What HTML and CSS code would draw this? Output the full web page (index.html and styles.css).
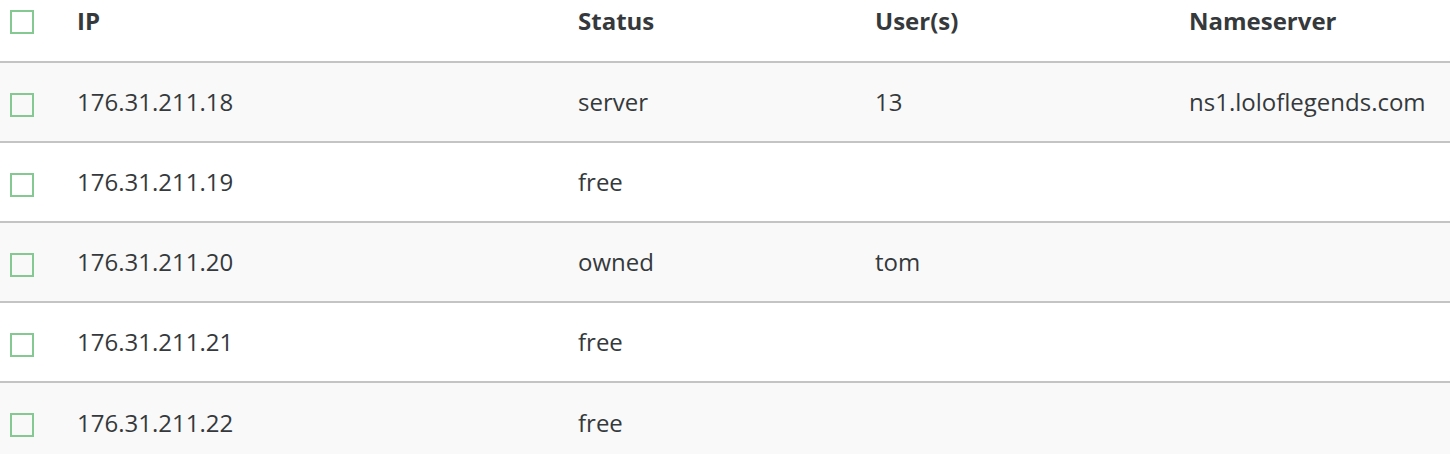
FILE: index.html
```html
<!DOCTYPE html>
<html>
<head>
<meta charset="utf-8">
<link rel="stylesheet" href="styles.css">
</head>
<body>
<table class="ip-table">
  <colgroup>
    <col class="c-check"><col class="c-ip"><col class="c-status"><col class="c-users"><col class="c-ns">
  </colgroup>
  <thead>
    <tr>
      <th class="cell-check"><span class="box"></span></th>
      <th>IP</th>
      <th>Status</th>
      <th>User(s)</th>
      <th>Nameserver</th>
    </tr>
  </thead>
  <tbody>
    <tr class="odd">
      <td class="cell-check"><span class="box"></span></td>
      <td>176.31.211.18</td><td>server</td><td>13</td><td>ns1.loloflegends.com</td>
    </tr>
    <tr>
      <td class="cell-check"><span class="box"></span></td>
      <td>176.31.211.19</td><td>free</td><td></td><td></td>
    </tr>
    <tr class="odd">
      <td class="cell-check"><span class="box"></span></td>
      <td>176.31.211.20</td><td>owned</td><td>tom</td><td></td>
    </tr>
    <tr>
      <td class="cell-check"><span class="box"></span></td>
      <td>176.31.211.21</td><td>free</td><td></td><td></td>
    </tr>
    <tr class="odd">
      <td class="cell-check"><span class="box"></span></td>
      <td>176.31.211.22</td><td>free</td><td></td><td></td>
    </tr>
  </tbody>
</table>
</body>
</html>
```
FILE: styles.css
```css
html, body {
  margin: 0;
  padding: 0;
  background: #ffffff;
}
body {
  font-family: "Open Sans", "Liberation Sans", sans-serif;
  color: #35393c;
  font-size: 24px;
}
.ip-table {
  width: 1450px;
  border-collapse: collapse;
  table-layout: fixed;
}
.c-check { width: 77px; }
.c-ip { width: 501px; }
.c-status { width: 297px; }
.c-users { width: 314px; }
.c-ns { width: auto; }

th, td {
  padding: 0;
  text-align: left;
  white-space: nowrap;
}
th {
  font-weight: 700;
  height: 62px;
  vertical-align: top;
  padding-top: 4px;
  line-height: 34px;
  border-bottom: 2px solid #c4c4c4;
  box-sizing: border-box;
}
thead th.cell-check {
  padding-top: 10px;
  line-height: 0;
}
td {
  height: 80px;
  box-sizing: border-box;
  vertical-align: middle;
  line-height: 34px;
  border-bottom: 2px solid #c4c4c4;
}
tbody tr:last-child td {
  border-bottom: none;
}
tr.odd td {
  background: #f9f9f9;
}
.cell-check {
  padding-left: 10px;
}
.box {
  display: inline-block;
  width: 24px;
  height: 24px;
  box-sizing: border-box;
  border: 2px solid #86c892;
  background: transparent;
  vertical-align: middle;
}
```
